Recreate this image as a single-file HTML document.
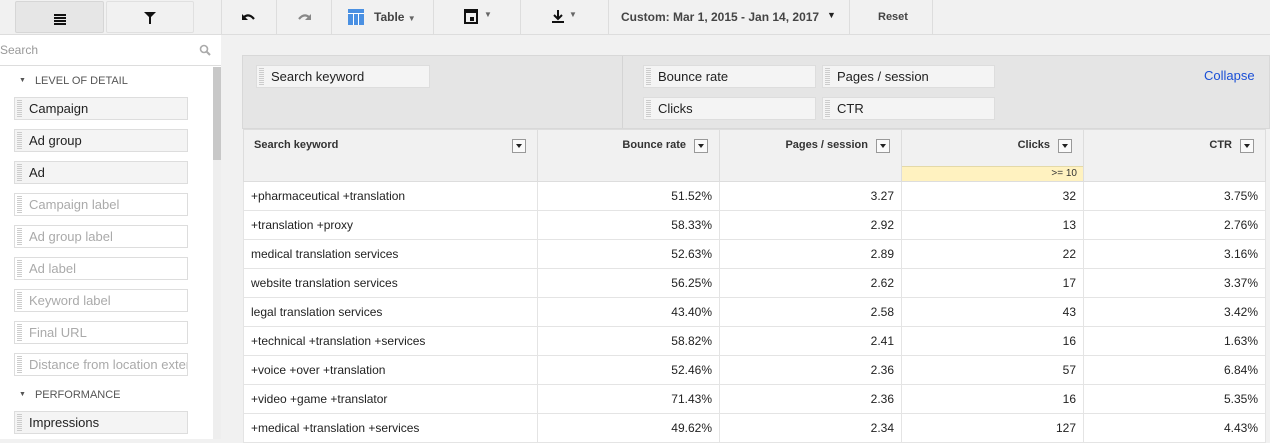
<!DOCTYPE html>
<html><head><style>
*{box-sizing:border-box;margin:0;padding:0}
body{width:1270px;height:439px;overflow:hidden;background:#f1f1f1;font-family:"Liberation Sans",Arial,sans-serif;font-size:12px;color:#222;position:relative}
.a{position:absolute}
.chip{position:absolute;height:23px;border:1px solid #ddd;background:#f4f4f4;font-size:13px;line-height:21px;padding-left:14px;color:#222}
.chip:before{content:"";position:absolute;left:2px;top:2px;bottom:2px;width:5px;background:repeating-linear-gradient(#ccc 0 1px,transparent 1px 2px)}
.chip.g{background:#fff;color:#aaa}
.sec{position:absolute;left:19px;font-size:11px;color:#555}
.sec:before{content:"▼";font-size:7px;margin-right:9px;vertical-align:2px}
table{border-collapse:collapse;position:absolute;left:243px;top:129px;width:1023px;background:#fff}
td{border:1px solid #e4e4e4;height:29px;font-size:12px;text-align:right;padding:0 7px;white-space:nowrap}
td:first-child{text-align:left}
th{background:#f1f1f1;border:1px solid #ddd;height:52px;vertical-align:top;text-align:right;font-size:11px;padding:9px 33px 0 0;position:relative;color:#333}
th:first-child{text-align:left;padding-left:10px}
th i{position:absolute;right:11px;top:9px;width:14px;height:14px;border:1px solid #999;background:#fafafa}
th i:after{content:"";position:absolute;left:3px;top:4px;border:3px solid transparent;border-top:4px solid #222}
.sep{position:absolute;top:0;width:1px;height:35px;background:#ddd}
</style></head><body>
<div class="a" style="left:0;top:0;width:1270px;height:35px;border-bottom:1px solid #ddd;background:#f1f1f1"></div>
<div class="a" style="left:15px;top:1px;width:89px;height:32px;background:#e6e6e6;border:1px solid #d6d6d6;border-radius:2px"></div>
<div class="a" style="left:106px;top:1px;width:88px;height:32px;border:1px solid #e0e0e0;border-radius:2px"></div>
<div class="a" style="left:54px;top:14px;width:12px;height:12px;background:repeating-linear-gradient(#111 0 2px,transparent 2px 3px)"></div>
<svg class="a" style="left:143px;top:11px" width="14" height="14"><path d="M1 1H13L8 6V13H6V6Z" fill="#111"/></svg>
<div class="sep" style="left:221px"></div>
<div class="sep" style="left:276px"></div>
<div class="sep" style="left:331px"></div>
<div class="sep" style="left:433px"></div>
<div class="sep" style="left:520px"></div>
<div class="sep" style="left:608px"></div>
<div class="sep" style="left:849px"></div>
<div class="sep" style="left:932px"></div>
<svg class="a" style="left:242px;top:12px" width="14" height="12"><path d="M2 5Q7 1 12 7" stroke="#111" stroke-width="2.2" fill="none"/><path d="M0 2L0 8L6 8Z" fill="#111"/></svg>
<svg class="a" style="left:297px;top:12px" width="14" height="12"><path d="M12 5Q7 1 2 7" stroke="#888" stroke-width="2.2" fill="none"/><path d="M14 2L14 8L8 8Z" fill="#888"/></svg>
<svg class="a" style="left:348px;top:9px" width="16" height="16"><rect x="0" y="0" width="16" height="16" fill="#4a90e2"/><rect x="0" y="4" width="16" height="1" fill="#fff"/><rect x="5" y="5" width="1" height="11" fill="#fff"/><rect x="10" y="5" width="1" height="11" fill="#fff"/></svg>
<div class="a" style="left:374px;top:10px;font-weight:bold;color:#444">Table <span style="font-size:8px;color:#666">▼</span></div>
<svg class="a" style="left:464px;top:8px" width="14" height="16"><rect x="1" y="2" width="12" height="13" fill="none" stroke="#111" stroke-width="2"/><rect x="1" y="2" width="12" height="3" fill="#111"/><rect x="6" y="9" width="4" height="4" fill="#111"/></svg>
<div class="a" style="left:484px;top:10px;font-size:8px;color:#666">▼</div>
<svg class="a" style="left:551px;top:9px" width="14" height="14"><path d="M7 1V9M3 6L7 10L11 6" stroke="#111" stroke-width="2" fill="none"/><rect x="1" y="12" width="12" height="2" fill="#111"/></svg>
<div class="a" style="left:569px;top:10px;font-size:8px;color:#666">▼</div>
<div class="a" style="left:621px;top:10px;font-weight:bold;color:#444;font-size:12px">Custom: Mar 1, 2015 - Jan 14, 2017</div>
<div class="a" style="left:827px;top:10px;font-size:9px;color:#222">▼</div>
<div class="a" style="left:878px;top:11px;font-weight:bold;color:#444;font-size:11px">Reset</div>
<div class="a" style="left:0;top:35px;width:221px;height:404px;background:#fff"></div>
<div class="a" style="left:0;top:35px;width:221px;height:31px;border-bottom:1px solid #ddd"></div>
<div class="a" style="left:0;top:43px;color:#999;font-size:12px">Search</div>
<svg class="a" style="left:199px;top:44px" width="12" height="12"><circle cx="5" cy="5" r="3.5" stroke="#aaa" stroke-width="1.6" fill="none"/><path d="M7.5 7.5L11 11" stroke="#aaa" stroke-width="2"/></svg>
<div class="a" style="left:213px;top:67px;width:8px;height:93px;background:#c8c8c8"></div>
<div class="a" style="left:213px;top:160px;width:8px;height:279px;background:#eee"></div>
<div class="sec" style="top:75px">LEVEL OF DETAIL</div>
<div class="chip" style="left:14px;top:97px;width:174px">Campaign</div>
<div class="chip" style="left:14px;top:129px;width:174px">Ad group</div>
<div class="chip" style="left:14px;top:161px;width:174px">Ad</div>
<div class="chip g" style="left:14px;top:193px;width:174px">Campaign label</div>
<div class="chip g" style="left:14px;top:225px;width:174px">Ad group label</div>
<div class="chip g" style="left:14px;top:257px;width:174px">Ad label</div>
<div class="chip g" style="left:14px;top:289px;width:174px">Keyword label</div>
<div class="chip g" style="left:14px;top:321px;width:174px">Final URL</div>
<div class="chip g" style="left:14px;top:353px;width:174px;overflow:hidden;white-space:nowrap">Distance from location extensions</div>
<div class="sec" style="top:389px">PERFORMANCE</div>
<div class="chip" style="left:14px;top:411px;width:174px">Impressions</div>
<div class="a" style="left:242px;top:55px;width:1028px;height:74px;background:#e5e5e5;border:1px solid #d8d8d8"></div>
<div class="a" style="left:622px;top:56px;width:1px;height:72px;background:#d4d4d4"></div>
<div class="chip" style="left:256px;top:65px;width:174px">Search keyword</div>
<div class="chip" style="left:643px;top:65px;width:173px">Bounce rate</div>
<div class="chip" style="left:822px;top:65px;width:173px">Pages / session</div>
<div class="chip" style="left:643px;top:97px;width:173px">Clicks</div>
<div class="chip" style="left:822px;top:97px;width:173px">CTR</div>
<div class="a" style="left:1204px;top:68px;color:#1a4fd6;font-size:13px">Collapse</div>
<table>
<tr><th style="width:294px">Search keyword<i></i></th><th style="width:182px">Bounce rate<i></i></th><th style="width:182px">Pages / session<i></i></th><th style="width:182px;padding:0">
<div style="padding:9px 33px 0 0;height:36px">Clicks</div><i></i><div style="background:#fff2c0;border-top:1px solid #e4d9a8;height:15px;font-weight:normal;font-size:10px;line-height:14px;padding-right:6px">&gt;= 10</div></th><th>CTR<i></i></th></tr>
<tr><td>+pharmaceutical +translation</td><td>51.52%</td><td>3.27</td><td>32</td><td>3.75%</td></tr>
<tr><td>+translation +proxy</td><td>58.33%</td><td>2.92</td><td>13</td><td>2.76%</td></tr>
<tr><td>medical translation services</td><td>52.63%</td><td>2.89</td><td>22</td><td>3.16%</td></tr>
<tr><td>website translation services</td><td>56.25%</td><td>2.62</td><td>17</td><td>3.37%</td></tr>
<tr><td>legal translation services</td><td>43.40%</td><td>2.58</td><td>43</td><td>3.42%</td></tr>
<tr><td>+technical +translation +services</td><td>58.82%</td><td>2.41</td><td>16</td><td>1.63%</td></tr>
<tr><td>+voice +over +translation</td><td>52.46%</td><td>2.36</td><td>57</td><td>6.84%</td></tr>
<tr><td>+video +game +translator</td><td>71.43%</td><td>2.36</td><td>16</td><td>5.35%</td></tr>
<tr><td>+medical +translation +services</td><td>49.62%</td><td>2.34</td><td>127</td><td>4.43%</td></tr>
</table>
</body></html>
